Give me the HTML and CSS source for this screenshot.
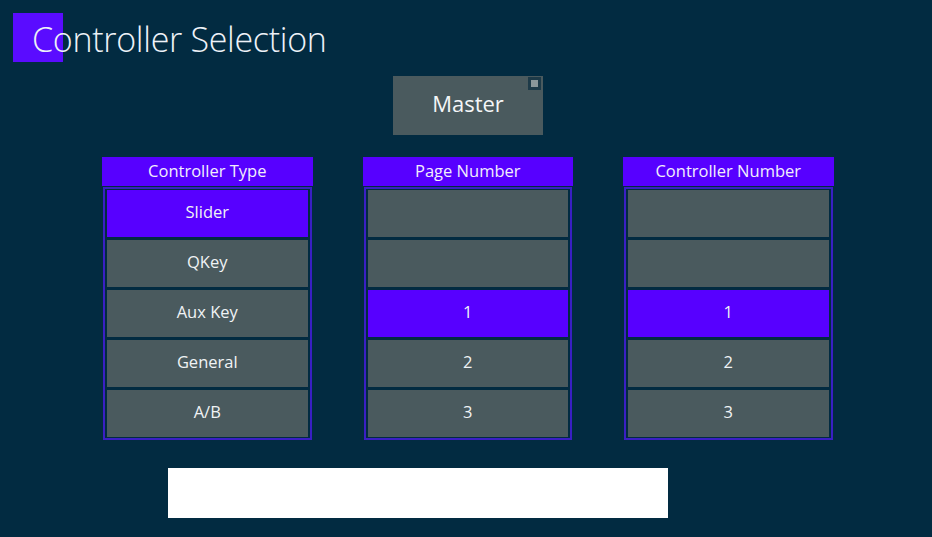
FILE: index.html
```html
<!DOCTYPE html>
<html>
<head>
<meta charset="utf-8">
<link rel="stylesheet" href="styles.css">
</head>
<body>
<div class="page">
  <header class="title-bar">
    <span class="title-mark"></span>
    <h1 class="title">Controller Selection</h1>
  </header>
  <div class="master-row">
    <button class="master">Master<span class="corner"></span></button>
  </div>
  <div class="columns">
    <section class="col">
      <div class="col-head">Controller Type</div>
      <div class="list">
        <div class="item sel">Slider</div>
        <div class="item">QKey</div>
        <div class="item">Aux Key</div>
        <div class="item">General</div>
        <div class="item">A/B</div>
      </div>
    </section>
    <section class="col">
      <div class="col-head">Page Number</div>
      <div class="list">
        <div class="item"></div>
        <div class="item"></div>
        <div class="item sel">1</div>
        <div class="item">2</div>
        <div class="item">3</div>
      </div>
    </section>
    <section class="col">
      <div class="col-head">Controller Number</div>
      <div class="list">
        <div class="item"></div>
        <div class="item"></div>
        <div class="item sel">1</div>
        <div class="item">2</div>
        <div class="item">3</div>
      </div>
    </section>
  </div>
  <div class="input-row">
    <div class="input-box"></div>
  </div>
</div>
</body>
</html>
```
FILE: styles.css
```css
html, body {
  margin: 0;
  padding: 0;
  background: #022b41;
}
.page {
  width: 932px;
  height: 537px;
  overflow: hidden;
  font-family: "Open Sans", "Noto Sans", sans-serif;
  color: #f2f4f8;
  display: flex;
  flex-direction: column;
}
.title-bar {
  position: relative;
  height: 76px;
}
.title-mark {
  position: absolute;
  left: 13px;
  top: 13px;
  width: 50px;
  height: 49px;
  background: #5a0cff;
}
.title {
  position: relative;
  margin: 0;
  padding: 16px 0 0 32px;
  font-size: 34px;
  font-weight: 300;
  line-height: 46px;
  letter-spacing: -0.3px;
  color: #eef2f8;
}
.master-row {
  display: flex;
  padding-left: 393px;
}
.master {
  position: relative;
  width: 150px;
  height: 59px;
  border: 0;
  padding: 0 0 5px 0;
  background: #4a5a5e;
  color: #f4f6f8;
  font-family: "Open Sans", "Noto Sans", sans-serif;
  font-size: 22px;
  font-weight: 400;
}
.corner {
  position: absolute;
  right: 2px;
  top: 1px;
  width: 7px;
  height: 7px;
  border: 3px solid #1d3a48;
  background: #8b979a;
}
.columns {
  display: flex;
  gap: 50px;
  padding-left: 102px;
  margin-top: 22px;
}
.col {
  width: 210.5px;
  display: flex;
  flex-direction: column;
}
.col-head {
  height: 29px;
  background: #5700ff;
  text-align: center;
  font-size: 16.5px;
  line-height: 28px;
  color: #f2eefc;
}
.list {
  margin: 1px 1px 0 1px;
  border: 2px solid #3a1fc4;
  padding: 0.5px 2px;
  display: flex;
  flex-direction: column;
  gap: 2.5px;
}
.item {
  height: 47.5px;
  background: #4a5a5e;
  text-align: center;
  line-height: 44px;
  box-sizing: border-box;
  font-size: 16.5px;
  color: #f0f3f5;
}
.item.sel {
  background: #5700ff;
}
.input-row {
  display: flex;
  padding-left: 168px;
  margin-top: 28px;
}
.input-box {
  width: 500px;
  height: 50px;
  background: #ffffff;
}
```
